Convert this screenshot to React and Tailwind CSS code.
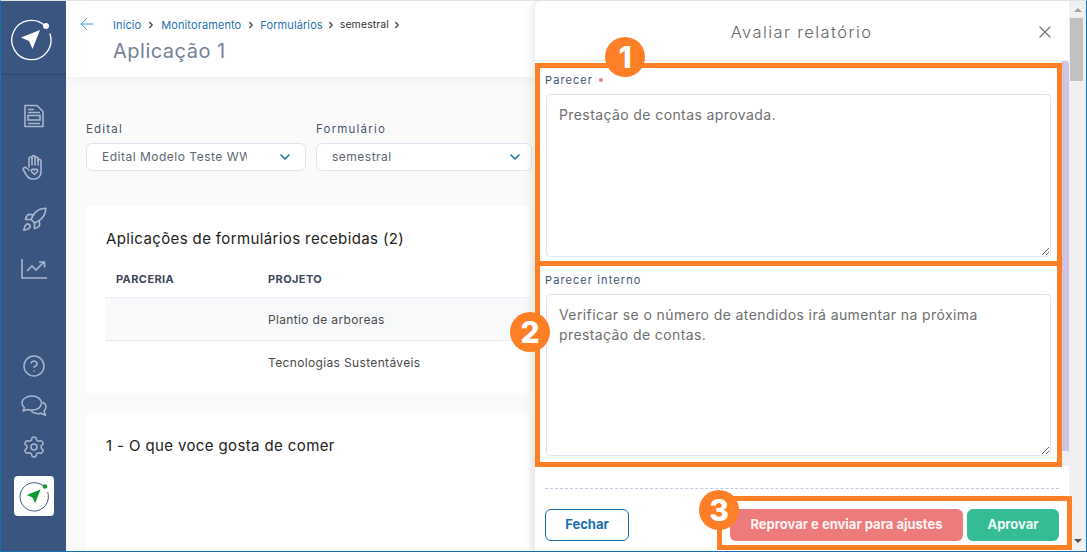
import React from 'react';
import { ArrowLeft, ChevronDown, ChevronRight, CircleHelp, Rocket, Settings, X } from 'lucide-react';

const font = { fontFamily: 'Inter, "Open Sans", sans-serif' };

function Logo({ size, ring, arrow, dot }) {
  return (
    <svg width={size} height={size} viewBox="0 0 44 44" fill="none">
      <path d="M36.6 9.6A19.6 19.6 0 1 0 41 17" stroke={ring} strokeWidth="1.3" strokeLinecap="round" />
      <circle cx="37" cy="9" r="3" fill={dot} />
      <path d="M31 13 L12 20.5 L20 24 L23.5 32 Z" fill={arrow} />
    </svg>
  );
}

function DocIcon() {
  return (
    <svg width="20" height="24" viewBox="0 0 20 24" fill="none" stroke="#a8b6cd" strokeWidth="1.6">
      <path d="M1 1.5h12l6 6v15H1z" strokeLinejoin="round" />
      <path d="M4 5.5h6M4 8.5h12M4 19.5h12" />
      <rect x="4" y="11.5" width="12" height="4.5" />
    </svg>
  );
}

function HandIcon() {
  return (
    <svg width="24" height="26" viewBox="0 0 24 26" fill="none" stroke="#a8b6cd" strokeWidth="1.6" strokeLinecap="round" strokeLinejoin="round">
      <path d="M7 13V4.5a1.5 1.5 0 0 1 3 0V3a1.5 1.5 0 0 1 3 0v1.5a1.5 1.5 0 0 1 3 0V7a1.5 1.5 0 0 1 3 0v11c0 4-3 7-6.500 7H10c-3 0-4.500-2-6-4.500L1.500 16c-1-2 1.500-3.500 3-2L7 16" />
      <path d="M10 4.500V11M13 3v8M16 4.500V11" />
      <path d="M12.500 20.500l-3-3c-1.200-1.500 1.500-3.500 3-1.500 1.500-2 4.200 0 3 1.500z" />
    </svg>
  );
}

function ChartIcon() {
  return (
    <svg width="26" height="20" viewBox="0 0 26 20" fill="none" stroke="#a8b6cd" strokeWidth="1.6">
      <path d="M1 0v19h25" />
      <path d="M6 12l5-5 4 4 8-8M18 3h5.500v5.500" />
    </svg>
  );
}

function ChatIcon() {
  return (
    <svg width="26" height="22" viewBox="0 0 26 22" fill="none" stroke="#a8b6cd" strokeWidth="1.500" strokeLinejoin="round">
      <path d="M11 1C5.500 1 1 4 1 8c0 2 1 3.500 2.500 4.800L2 16l4.500-1.500c1.400.4 3 .6 4.500.6 5.500 0 9.500-3 9.500-7S16.500 1 11 1z" />
      <path d="M21.500 7c2 1.200 3.500 3 3.500 5 0 1.700-.8 3-2 4.200l1.500 4-4.500-2c-3.500 1-8 .2-10-2.500" />
    </svg>
  );
}

function Select({ value, className }) {
  return (
    <div className={`flex h-7 items-center justify-between rounded-md border border-[#dde6f0] bg-white pl-[15px] ${className}`}>
      <span className="w-[145px] overflow-hidden whitespace-nowrap text-[12px] tracking-[0.5px] text-[#5c6675]">{value}</span>
      <ChevronDown size={16} strokeWidth={2.400} className="text-[#1a6fb0]" />
    </div>
  );
}

function Badge({ n, className }) {
  return (
    <div className={`absolute flex h-10 w-10 items-center justify-center rounded-full bg-[#ff7f27] text-[30px] font-extrabold leading-none text-white ${className}`}>
      {n}
    </div>
  );
}

export default function App() {
  return (
    <div style={font} className="relative flex h-[552px] w-[1087px] overflow-hidden border-t border-t-[#dfe3e8] border-b border-b-[#1a6fb0] border-l border-l-[#1a6fb0] border-r border-r-[#1a6fb0] bg-[#fafafa]">
      {/* sidebar */}
      <aside className="flex w-[65px] shrink-0 flex-col items-center bg-[#3a5580]">
        <div className="flex h-[74px] w-full items-center justify-center border-b border-[#2f4870] pr-[6px] pt-[2px]">
          <Logo size={44} ring="#ffffff" arrow="#ffffff" dot="#ffffff" />
        </div>
        <div className="mt-[29px] flex flex-col items-center gap-[26px] pl-px">
          <DocIcon />
          <HandIcon />
          <Rocket size={27} strokeWidth={1.500} className="text-[#a8b6cd]" />
          <ChartIcon />
        </div>
        <div className="mt-auto flex flex-col items-center gap-[17px] pl-px">
          <CircleHelp size={24} strokeWidth={1.500} className="text-[#a8b6cd]" />
          <ChatIcon />
          <Settings size={24} strokeWidth={1.500} className="mt-px text-[#a8b6cd]" />
          <div className="mb-[35px] flex h-10 w-10 items-center justify-center rounded bg-white">
            <Logo size={32} ring="#3a5580" arrow="#0d9a2e" dot="#0d9a2e" />
          </div>
        </div>
      </aside>

      {/* main content */}
      <main className="w-[469px] shrink-0 overflow-hidden">
        <header className="flex h-[76px] bg-white pl-[14px] pt-[15px] shadow-[0_4px_12px_rgba(0,0,0,0.04)]">
          <ArrowLeft size={20} strokeWidth={1.100} className="-ml-[3px] -mt-[2px] text-[#3d8ed0]" />
          <div className="ml-[16px] pt-px">
            <div className="flex h-[16px] items-center text-[11px] tracking-[0.1px] text-[#2a72b0]">
              <span>Início</span>
              <ChevronRight size={10} strokeWidth={3} className="mx-[5px] text-[#444]" />
              <span>Monitoramento</span>
              <ChevronRight size={10} strokeWidth={3} className="ml-[5px] mr-[4px] text-[#444]" />
              <span>Formulários</span>
              <ChevronRight size={10} strokeWidth={3} className="ml-[3px] mr-[4px] text-[#444]" />
              <span className="text-[10.500px] text-[#333]">semestral</span>
              <ChevronRight size={10} strokeWidth={3} className="ml-[3px] text-[#444]" />
            </div>
            <h1 className="mt-[4px] text-[20px] font-normal leading-7 tracking-[0.5px] text-[#748196]">Aplicação 1</h1>
          </div>
        </header>

        <div className="mt-[44px] flex gap-[10px] pl-5">
          <div className="w-[220px] shrink-0">
            <div className="mb-[6px] text-[11.500px] leading-4 tracking-[1.200px] text-[#4a5568]">Edital</div>
            <Select value="Edital Modelo Teste WW" className="w-[220px] pr-[12px]" />
          </div>
          <div className="w-[216px] shrink-0">
            <div className="mb-[6px] text-[11.500px] leading-4 tracking-[1.200px] text-[#4a5568]">Formulário</div>
            <Select value="semestral" className="w-[216px] pr-[8px]" />
          </div>
        </div>

        <section className="ml-5 mt-[35px] h-[187px] w-[444px] rounded bg-white pl-5 pt-[23px]">
          <h2 className="text-[15px] leading-5 tracking-[0.38px] text-[#222]">Aplicações de formulários recebidas (2)</h2>
          <div className="mt-[11px] flex h-[38px] items-center border-b border-dotted border-[#d8dce4] pt-[2px] text-[11px] font-bold tracking-[0.4px] text-[#3d4759]">
            <span className="ml-[10px] w-[152px]">PARCERIA</span>
            <span>PROJETO</span>
          </div>
          <div className="flex h-[43px] items-center border-b border-dotted border-[#d8dce4] bg-[#f8f9fa] pl-[162px] pt-[2px] text-[12px] tracking-[0.35px] text-[#4a4a4a]">
            Plantio de arboreas
          </div>
          <div className="flex h-[43px] items-center pl-[162px] text-[12px] tracking-[0.35px] text-[#4a4a4a]">
            Tecnologias Sustentáveis
          </div>
        </section>

        <section className="ml-5 mt-5 h-[200px] w-[444px] rounded bg-white pl-5 pt-[23px]">
          <h2 className="text-[15px] leading-5 tracking-[0.38px] text-[#222]">1 - O que voce gosta de comer</h2>
        </section>
      </main>

      {/* drawer */}
      <div className="flex w-[534px] shrink-0 flex-col rounded-tl-md bg-white pt-px shadow-[-4px_0_8px_rgba(0,0,0,0.08)]">
        <div className="relative flex h-[59px] shrink-0 items-center justify-center border-b border-[#e8ebf0] pr-px pt-[2px]">
          <span className="text-[16.500px] font-light tracking-[1.400px] text-[#666]">Avaliar relatório</span>
          <X size={20} strokeWidth={1.500} className="absolute right-[14px] top-[20px] text-[#777]" />
        </div>
        <div className="flex h-[405px] shrink-0">
          <div className="w-[526px] pl-[10px]">
            <div className="mt-[11px] flex h-4 items-center text-[11px] tracking-[1.100px] text-[#44546a]">
              Parecer <span className="ml-[6px] h-1 w-1 rounded-full bg-[#ee7b7b]" />
            </div>
            <textarea readOnly value="Prestação de contas aprovada." className="ml-px mt-[6px] block h-[163px] w-[505px] rounded border border-[#dde6f0] px-[12px] pb-[10px] pt-[10px] text-[14px] leading-[20px] tracking-[0.4px] text-[#6f6f6f] outline-none" />
            <div className="mt-[15px] flex h-4 items-center text-[11px] tracking-[1.100px] text-[#44546a]">
              Parecer interno
            </div>
            <textarea readOnly value={'Verificar se o número de atendidos irá aumentar na próxima\nprestação de contas.'} className="ml-px mt-[6px] block h-[162px] w-[505px] rounded border border-[#dde6f0] px-[12px] pb-[10px] pt-[10px] text-[14px] leading-[20px] tracking-[0.4px] text-[#6f6f6f] outline-none" />
          </div>
          <div className="h-full w-2 bg-[#edf0f3]">
            <div className="h-[390px] rounded-t bg-[#cfc4e4]" />
          </div>
        </div>
        <div className="mx-[10px] mt-[22px] w-[514px] border-t border-dashed border-[#bccbdf]" />
        <div className="mt-5 flex w-[524px] pl-[10px]">
          <button className="h-8 w-[84px] rounded-md border border-[#1a6fb0] text-[13px] font-bold text-[#1a6fb0]">Fechar</button>
          <button className="ml-auto h-8 w-[233px] rounded-md bg-[#ee7b7b] text-[13px] font-bold text-[#fff3f3]">Reprovar e enviar para ajustes</button>
          <button className="ml-1 h-8 w-[92px] rounded-md bg-[#36bc94] text-[13px] font-bold text-[#effaf6]">Aprovar</button>
        </div>
      </div>

      {/* page scrollbar */}
      <div className="relative w-[17px] shrink-0 bg-[#f0f0f0]">
        <div className="absolute left-[5px] top-[7px] h-0 w-0 border-x-[4px] border-b-[4px] border-x-transparent border-b-[#a3a3a3]" />
        <div className="absolute left-[1px] top-[17px] h-[63px] w-[13px] bg-[#c1c1c1]" />
        <div className="absolute bottom-[8px] left-[5px] h-0 w-0 border-x-[4px] border-t-[4px] border-x-transparent border-t-[#505050]" />
      </div>

      {/* tutorial annotations */}
      <div className="absolute left-[534px] top-[62px] h-[203px] w-[527px] border-[5px] border-[#ff7f27]" />
      <div className="absolute left-[534px] top-[260px] h-[206px] w-[527px] border-[5px] border-[#ff7f27]" />
      <div className="absolute left-[716px] top-[495px] h-[54px] w-[355px] border-[5px] border-[#ff7f27]" />
      <Badge n="1" className="left-[604px] top-[36px]" />
      <Badge n="2" className="left-[509px] top-[311px]" />
      <Badge n="3" className="left-[698px] top-[489px]" />
    </div>
  );
}
